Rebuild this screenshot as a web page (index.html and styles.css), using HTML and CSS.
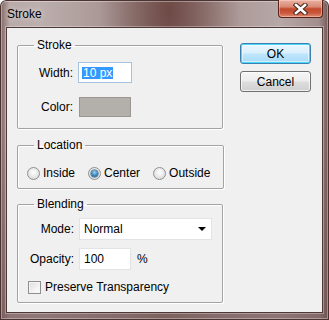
FILE: index.html
```html
<!DOCTYPE html>
<html lang="en">
<head>
  <meta charset="UTF-8" />
  <title>Stroke</title>
  <link rel="stylesheet" href="styles.css">
</head>
<body>

  <div class="window">
    <div class="titlebar">
      <span class="title">Stroke</span>
      <span class="close-btn">
        <svg width="15" height="12" viewBox="0 0 15 12">
          <path d="M3 2 L12 10 M12 2 L3 10" stroke="#4a2a24" stroke-width="4.6" stroke-linecap="square"/>
          <path d="M3 2 L12 10 M12 2 L3 10" stroke="#fff" stroke-width="2.6" stroke-linecap="square"/>
        </svg>
      </span>
    </div>

    <div class="client">
      <div class="groups">

        <fieldset class="group stroke-group">
          <legend>Stroke</legend>
          <div class="rows">
            <span class="label">Width:</span>
            <div class="field width-field"><span class="selected">10 px</span></div>
            <span class="label">Color:</span>
            <div class="swatch"></div>
          </div>
        </fieldset>

        <fieldset class="group location-group">
          <legend>Location</legend>
          <div class="radios">
            <span class="option"><span class="radio"></span>Inside</span>
            <span class="option"><span class="radio checked"></span>Center</span>
            <span class="option"><span class="radio"></span>Outside</span>
          </div>
        </fieldset>

        <fieldset class="group blending-group">
          <legend>Blending</legend>
          <div class="rows">
            <span class="label">Mode:</span>
            <div class="field select">
              <span>Normal</span>
              <span class="arrow"></span>
            </div>
            <span class="label">Opacity:</span>
            <div class="opacity">
              <div class="field opacity-field">100</div>
              <span>%</span>
            </div>
          </div>
          <div class="check-row"><span class="checkbox"></span>Preserve Transparency</div>
        </fieldset>

      </div>

      <div class="buttons">
        <button class="btn default">OK</button>
        <button class="btn">Cancel</button>
      </div>
    </div>
  </div>

</body>
</html>
```

FILE: styles.css
```css
body {
  margin: 0;
  font-family: "Liberation Sans", Arial, sans-serif;
  font-size: 12px;
  color: #000;
  background: #fff;
}

.window {
  width: 329px;
  height: 320px;
  box-sizing: border-box;
  padding: 0 6px 7px 6px;
  display: flex;
  flex-direction: column;
  border-radius: 6px 6px 0 0;
  background:
    radial-gradient(ellipse 70px 160px at 170px 10px, rgba(104,66,62,0.85) 0%, rgba(104,66,62,0) 100%),
    linear-gradient(rgba(110,80,78,0) 0%, rgba(110,80,78,0) 40%, rgba(110,80,78,0.6) 100%),
    linear-gradient(90deg, #7f6562 0%, #b9aaa9 3%, #bcafae 12%, #a69391 35%, #937976 50%, #a99694 68%, #b6a8a7 85%, #a28d8b 97%, #6f5553 100%);
  box-shadow: inset 0 0 0 1px #4a3331, inset 0 0 0 2px rgba(255,255,255,0.35);
}

.titlebar {
  height: 27px;
  flex: none;
  display: flex;
  justify-content: space-between;
  align-items: flex-start;
}

.title {
  padding: 7px 0 0 1px;
  font-size: 12px;
  text-shadow: 0 0 6px rgba(255,255,255,0.8);
}

.close-btn {
  width: 45px;
  height: 18px;
  box-sizing: border-box;
  display: flex;
  justify-content: center;
  align-items: center;
  border: 1px solid #5a2219;
  border-top: none;
  border-radius: 0 0 4px 4px;
  background: linear-gradient(#eab2a3 0%, #d98a73 40%, #c14a2d 52%, #c9553a 75%, #e08b70 100%);
  box-shadow: inset 0 0 0 1px rgba(255,220,210,0.45);
}

.client {
  flex: 1;
  display: flex;
  background: #f0f0f0;
  border: 1px solid #4f3937;
  box-shadow: 0 0 0 1px rgba(255,255,255,0.3);
}

.groups {
  width: 206px;
  padding: 10px 0 0 10px;
}

.group {
  margin: 0;
  padding: 0;
  border: 1px solid #a3a3a3;
  border-radius: 2px;
  box-shadow: inset 1px 1px 0 #fff, 1px 1px 0 #fff;
}

.group legend {
  margin-left: 16px;
  padding: 0 3px;
  line-height: 14px;
}

.location-group {
  margin-top: 9px;
}

.blending-group {
  margin-top: 8px;
}

.rows {
  display: grid;
  grid-template-columns: 56px auto;
  column-gap: 5px;
  align-items: center;
  justify-items: start;
}

.label {
  justify-self: end;
}

.stroke-group .rows {
  grid-template-columns: 55px auto;
  row-gap: 14px;
  padding: 10px 0 11px 0;
}

.field {
  box-sizing: border-box;
  background: #fff;
  border: 1px solid #d9dde3;
  display: flex;
  align-items: center;
  padding-left: 4px;
}

.width-field {
  width: 54px;
  height: 21px;
  border-color: #a5c3de;
  padding-left: 4px;
}

.selected {
  background: #3399ff;
  color: #fff;
  padding: 0 1px;
  line-height: 12px;
  margin-left: -1px;
}

.swatch {
  width: 52px;
  height: 20px;
  margin-left: 1px;
  box-sizing: border-box;
  background: #b3afab;
  border: 1px solid #9a9793;
}

.radios {
  display: flex;
  align-items: center;
  padding: 14px 0 8px 9px;
  height: 14px;
}

.option {
  display: flex;
  align-items: center;
  gap: 3px;
  margin-right: 13px;
}

.radio {
  width: 13px;
  height: 13px;
  box-sizing: border-box;
  border-radius: 50%;
  border: 1px solid #8f9090;
  background: radial-gradient(circle at 50% 40%, #ffffff 0%, #e9e9e9 50%, #cfcfcf 100%);
  display: flex;
  justify-content: center;
  align-items: center;
}

.radio.checked::after {
  content: "";
  width: 7px;
  height: 7px;
  border-radius: 50%;
  background: radial-gradient(circle at 50% 35%, #9fd2ee 0%, #3b84b8 55%, #1b4f7c 100%);
  box-shadow: 0 0 0 0.5px #25517a;
}

.blending-group .rows {
  row-gap: 8px;
  padding-top: 7px;
}

.select {
  width: 133px;
  height: 22px;
  justify-content: space-between;
  padding-right: 5px;
  border-color: #e2e3e5;
}

.arrow {
  width: 0;
  height: 0;
  border-left: 4px solid transparent;
  border-right: 4px solid transparent;
  border-top: 4px solid #000;
}

.opacity {
  display: flex;
  align-items: center;
  gap: 6px;
}

.opacity-field {
  width: 52px;
  height: 22px;
  border-color: #e2e3e5;
}

.check-row {
  display: flex;
  align-items: center;
  gap: 4px;
  padding: 10px 0 8px 10px;
}

.checkbox {
  width: 13px;
  height: 13px;
  box-sizing: border-box;
  border: 1px solid #8f8f8f;
  background: linear-gradient(135deg, #dcdcdc 0%, #f2f2f2 60%, #ffffff 100%);
  box-shadow: inset 0 0 0 1px #f4f4f4;
}

.buttons {
  display: flex;
  flex-direction: column;
  gap: 7px;
  padding: 15px 0 0 17px;
}

.btn {
  width: 71px;
  height: 21px;
  box-sizing: border-box;
  font-family: "Liberation Sans", Arial, sans-serif;
  font-size: 12px;
  color: #000;
  border: 1px solid #707070;
  border-radius: 3px;
  padding: 0;
  background: linear-gradient(#f6f6f6 0%, #ececec 48%, #dddddd 52%, #d0d0d0 100%);
  box-shadow: inset 0 0 0 1px rgba(255,255,255,0.7);
}

.btn.default {
  border-color: #3c7fb1;
  background: linear-gradient(#eaf6fd 0%, #d9f0fc 48%, #bee6fd 52%, #a7d9f5 100%);
  box-shadow: inset 0 0 0 1px #48d7fb, inset 0 0 0 2px rgba(255,255,255,0.5);
}
```
